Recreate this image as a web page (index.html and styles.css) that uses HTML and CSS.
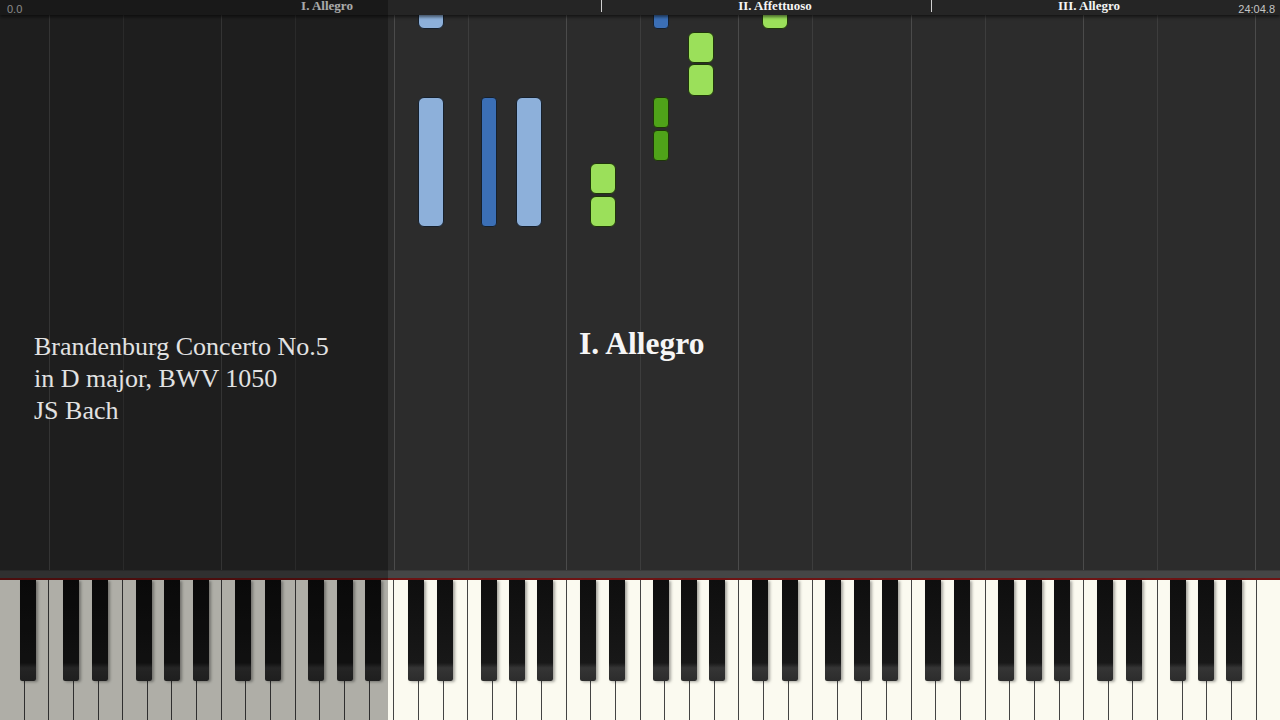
FILE: index.html
```html
<!DOCTYPE html>
<html lang="en">
<head>
  <meta charset="UTF-8" />
  <title>Brandenburg Concerto No.5 | Piano Roll</title>
  <link rel="stylesheet" href="styles.css">
</head>
<body>
  <header class="timeline">
    <span class="clock">0.0</span>
    <span class="mark" style="left: 327px">I. Allegro</span>
    <span class="tick" style="left: 601px"></span>
    <span class="mark" style="left: 775px">II. Affettuoso</span>
    <span class="tick" style="left: 931px"></span>
    <span class="mark" style="left: 1089px">III. Allegro</span>
    <span class="clock">24:04.8</span>
  </header>

  <main class="roll">
    <!-- falling notes, left = key position -->
    <div class="note light-blue" style="left: 418px; top: -10px; height: 24px"></div>
    <div class="note light-blue" style="left: 418px; top: 82px; height: 130px"></div>
    <div class="note blue" style="left: 481px; top: 82px; height: 130px"></div>
    <div class="note light-blue" style="left: 516px; top: 82px; height: 130px"></div>
    <div class="note green" style="left: 590px; top: 148px; height: 31px"></div>
    <div class="note green" style="left: 590px; top: 181px; height: 31px"></div>
    <div class="note blue" style="left: 653px; top: -10px; height: 24px"></div>
    <div class="note dark-green" style="left: 653px; top: 82px; height: 31px"></div>
    <div class="note dark-green" style="left: 653px; top: 115px; height: 31px"></div>
    <div class="note green" style="left: 688px; top: 17px; height: 31px"></div>
    <div class="note green" style="left: 688px; top: 49px; height: 32px"></div>
    <div class="note green" style="left: 762px; top: -10px; height: 24px"></div>

    <h1 class="movement">I. Allegro</h1>
  </main>

  <div class="rail"></div>
  <div class="keyboard" id="keyboard"></div>

  <aside class="shade">
    <p class="credits">Brandenburg Concerto No.5<br>in D major, BWV 1050<br>JS Bach</p>
  </aside>

  <script>
    const keyboard = document.getElementById("keyboard");
    const whiteWidth = 1280 / 52;
    const names = ["A", "B", "C", "D", "E", "F", "G"];
    // black keys sit a little off the white key boundary, like a real piano
    const blackOffset = { A: 3.6, C: -2.8, D: 2, F: -3.7, G: 0 };

    for (let i = 0; i < 52; i++) {
      const white = document.createElement("div");
      white.className = "white-key";
      keyboard.appendChild(white);

      const name = names[i % 7];
      if (name in blackOffset && i < 51) {
        const black = document.createElement("div");
        black.className = "black-key";
        black.style.left = `${(i + 1) * whiteWidth + blackOffset[name] - 8}px`;
        keyboard.appendChild(black);
      }
    }
  </script>
</body>
</html>
```

FILE: styles.css
```css
body {
  margin: 0;
  width: 1280px;
  height: 720px;
  overflow: hidden;
  position: relative;
  display: flex;
  flex-direction: column;
  background-color: #2c2c2c;
  font-family: "Liberation Serif", serif;
}

.timeline {
  position: relative;
  z-index: 2;
  height: 15px;
  flex: none;
  display: flex;
  justify-content: space-between;
  align-items: center;
  padding: 0 5px 0 7px;
  background-color: #252525;
  box-shadow: 0 2px 3px rgba(0, 0, 0, 0.55);
}

.clock {
  font-family: "Liberation Sans", sans-serif;
  font-size: 11px;
  color: #c4c4c4;
  padding-top: 2px;
}

.mark {
  position: absolute;
  top: -2px;
  transform: translateX(-50%);
  font-size: 13px;
  font-weight: bold;
  color: #f4f4f4;
  white-space: nowrap;
}

.tick {
  position: absolute;
  top: 0;
  width: 1px;
  height: 12px;
  background-color: #d0d0d0;
}

.roll {
  position: relative;
  flex: 1;
  overflow: hidden;
  background-color: #2c2c2c;
  background-image: repeating-linear-gradient(to right,
    transparent 0 49px,
    #4b4b4b 49px 50px,
    transparent 50px 123px,
    #3d3d3d 123px 124px,
    transparent 124px 172.3077px);
}

.note {
  position: absolute;
  width: 25px;
  border: 1px solid #16202c;
  border-radius: 6px;
  box-sizing: border-box;
}

.light-blue {
  width: 26px;
  background-color: #8db0da;
}

.blue {
  width: 16px;
  border-radius: 4px;
  background-color: #3b6fb6;
}

.green {
  width: 26px;
  background-color: #9be05a;
  border-color: #1e3609;
}

.dark-green {
  width: 16px;
  border-radius: 4px;
  background-color: #4fa319;
  border-color: #1e3609;
}

.movement {
  position: absolute;
  left: 579px;
  top: 311px;
  margin: 0;
  font-size: 31.5px;
  font-weight: bold;
  color: #f6f6f6;
}

.rail {
  flex: none;
  height: 7px;
  background-color: #454646;
  border-top: 1px solid #3a3a3a;
  border-bottom: 2px solid #6e1414;
}

.keyboard {
  position: relative;
  flex: none;
  height: 140px;
  display: flex;
}

.white-key {
  flex: 1;
  background-color: #fbfaf0;
  border-left: 1px solid #444;
}

.white-key:first-child {
  border-left: none;
}

.black-key {
  position: absolute;
  top: 0;
  width: 16px;
  height: 101px;
  border-radius: 0 0 2px 2px;
  background: linear-gradient(to bottom, #0e0e0e 0%, #181818 82%, #353535 87%, #2c2c2c 100%);
  box-shadow: 2px 1px 3px rgba(0, 0, 0, 0.35);
}

.shade {
  position: absolute;
  z-index: 3;
  left: 0;
  top: 0;
  width: 388px;
  height: 720px;
  background-color: rgba(0, 0, 0, 0.3);
}

.credits {
  margin: 0;
  padding: 331px 0 0 34px;
  font-size: 26px;
  line-height: 32px;
  color: #e2e2e2;
}
```
